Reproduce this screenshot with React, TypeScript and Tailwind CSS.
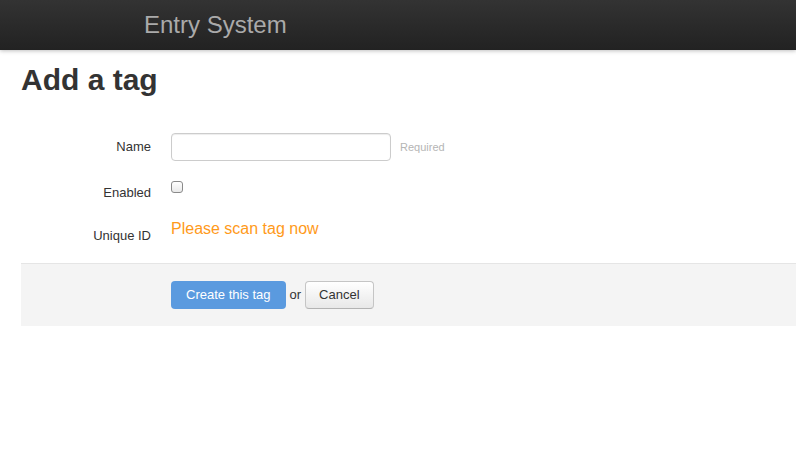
const App = () => {
  return (
    <div className="min-h-[466px] bg-white font-['Liberation_Sans',Arial,sans-serif] text-[#333]">
      <header className="relative h-[50px] bg-gradient-to-b from-[#333333] to-[#222222] shadow-[0_1px_4px_rgba(0,0,0,0.25)]">
        <div className="flex h-full items-center pl-[144px]">
          <a href="#" className="text-[24px] leading-[30px] text-[#aaaaaa]">
            Entry System
          </a>
        </div>
      </header>

      <main className="pl-[21px]">
        <h1 className="mt-[12px] text-[30px] leading-[36px] font-bold text-[#333]">Add a tag</h1>

        <form className="mt-[35px]" onSubmit={(e) => e.preventDefault()}>
          <div className="flex h-[28px] items-center">
            <label htmlFor="tag-name" className="w-[130px] text-right text-[13px] text-[#333]">
              Name
            </label>
            <input
              id="tag-name"
              type="text"
              className="ml-[20px] h-[28px] w-[220px] rounded-[4px] border border-[#cccccc] bg-white px-[6px] text-[13px] shadow-[inset_0_1px_1px_rgba(0,0,0,0.075)] outline-none"
            />
            <span className="ml-[9px] text-[11px] text-[#b5b5b5]">Required</span>
          </div>

          <div className="mt-[18px] flex h-[28px] items-center">
            <label htmlFor="tag-enabled" className="w-[130px] text-right text-[13px] text-[#333]">
              Enabled
            </label>
            <input
              id="tag-enabled"
              type="checkbox"
              className="mb-[12px] ml-[20px] h-[12px] w-[12px] appearance-none rounded-[3px] border border-[#8a8a8a] bg-gradient-to-b from-white to-[#e9e9e9]"
            />
          </div>

          <div className="mt-[12px] flex items-start">
            <span className="w-[130px] pt-[10px] text-right text-[13px] leading-[14px] text-[#333]">Unique ID</span>
            <span className="ml-[20px] text-[16px] leading-[20px] text-[#ff9a1a]">Please scan tag now</span>
          </div>

          <div className="mt-[20px] flex items-center border-t border-[#e5e5e5] bg-[#f4f4f4] pt-[17px] pb-[17px] pl-[150px]">
            <button
              type="submit"
              className="h-[28px] rounded-[4px] bg-[#5a9adf] px-[15px] text-[13px] text-white"
            >
              Create this tag
            </button>
            <span className="mx-[4px] text-[13px] text-[#333]">or</span>
            <button
              type="button"
              className="h-[28px] rounded-[4px] border border-[#c5c5c5] border-b-[#b3b3b3] bg-gradient-to-b from-white to-[#e8e8e8] px-[13px] text-[13px] text-[#333]"
            >
              Cancel
            </button>
          </div>
        </form>
      </main>
    </div>
  );
};

export default App;
